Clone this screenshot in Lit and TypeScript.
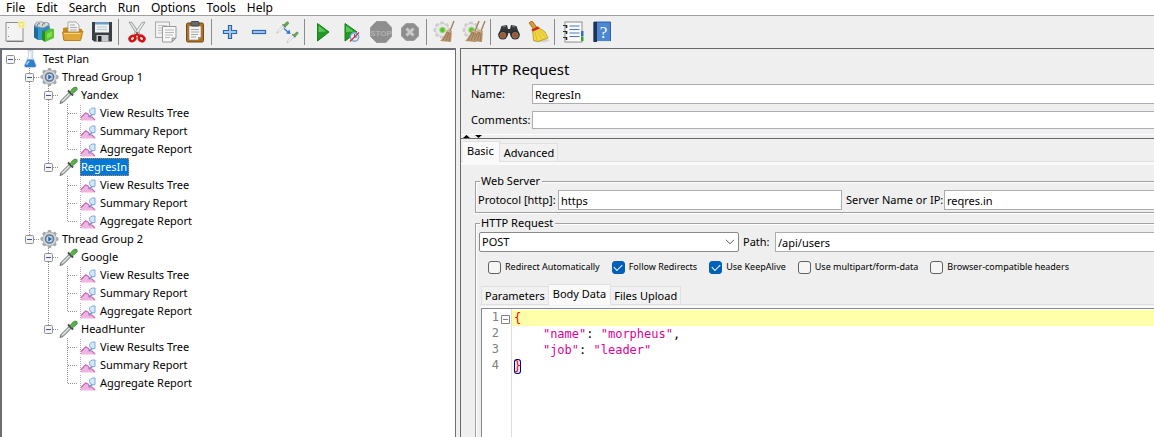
import { LitElement, html, css, svg, nothing, type TemplateResult, type SVGTemplateResult } from "lit";
import { customElement, state } from "lit/decorators.js";
import { classMap } from "lit/directives/class-map.js";

type Kind = "plan" | "group" | "sampler" | "report";
interface TreeNode { label: string; kind: Kind; children?: TreeNode[]; }
interface Tool { name: string; art: SVGTemplateResult; off?: boolean; }

const reports = (): TreeNode[] =>
  ["View Results Tree", "Summary Report", "Aggregate Report"].map((label) => ({ label, kind: "report" as Kind }));

const plan: TreeNode = {
  label: "Test Plan", kind: "plan", children: [
    { label: "Thread Group 1", kind: "group", children: [
      { label: "Yandex", kind: "sampler", children: reports() },
      { label: "RegresIn", kind: "sampler", children: reports() },
    ] },
    { label: "Thread Group 2", kind: "group", children: [
      { label: "Google", kind: "sampler", children: reports() },
      { label: "HeadHunter", kind: "sampler", children: reports() },
    ] },
  ],
};

const gearTeeth = (cx: number, cy: number, r: number, w: number, fill: string) =>
  [0, 45, 90, 135].map((a) => svg`<rect x=${cx - w / 2} y=${cy - r} width=${w} height=${r * 2} rx="1" fill=${fill} transform="rotate(${a} ${cx} ${cy})"/>`);

const broom = (x: number) => svg`<g transform="translate(${x} 0)">
  <path d="M20 1 L16 11" stroke="#a08260" stroke-width="1.400"/>
  <path d="M13 10 L18 11 L17 22 L6 21 C9 18 11 15 13 10Z" fill="#bb9770"/>
  <path d="M13.500 12 L9 20.500 M15 12 L12 21 M16.500 12 L15 21.500" stroke="#8d6c4b" stroke-width=".7"/>
  <path d="M12.800 11 L18 12.500" stroke="#d9b98e"/></g>`;

const paleGear = svg`${gearTeeth(9, 10, 8.5, 4, "#cfcfcf")}<circle cx="9" cy="10" r="6.500" fill="#e8e8e8" stroke="#c2c2c2" stroke-width=".6"/>
  <circle cx="9.500" cy="10" r="2.800" fill="#5fc42c" stroke="#9bd97b"/>`;

const pipette = (t: string) => svg`<g transform=${t}>
  <path d="M1 17 L3 13 L10 6 L12 8 L5 15Z" fill="#f6f8f8" stroke="#b4bcbc" stroke-width=".9"/>
  <path d="M9 4.500 L13.500 9" stroke="#6b7a68" stroke-width="1.800"/>
  <path d="M11 6 L14 2.500 Q16 .8 17 2 Q17.800 3.500 16 5 L13 7.500Z" fill="#68ac58" stroke="#5a9a4c" stroke-width="1.400"/></g>`;

const groups: Tool[][] = [
  [
    { name: "New", art: svg`<rect x="3" y="2.500" width="17" height="18.500" fill="#f3f3f3" stroke="#8f8f8f"/><path d="M4 21.500H20.500" stroke="#777"/><path d="M5 7.500h1M5 16.500h1" stroke="#888"/><circle cx="18.500" cy="4.500" r="4" fill="#f7ee9a" opacity=".9"/><circle cx="18.500" cy="4.500" r="1.700" fill="#fffde0" stroke="#e6cf3a" stroke-width=".8"/>` },
    { name: "Templates", art: svg`<path d="M2 5 L9 2 L17 3 L18 9 L10 20 L2 17Z" fill="#3989b8"/><path d="M3 6 Q3 1.500 7 2 Q10 1 12 3 Q16 1 17 5 L11 8Z" fill="#d9dcdd" stroke="#8b979d" stroke-width=".8"/><path d="M5 6q1-4 3-2M10 6q1-4 3-2" stroke="#777" fill="none"/><path d="M2 7 L6 9 V20 L2 17.500Z" fill="#1d6b9b"/><path d="M6 9 L11 7.500 V20 L6 20Z" fill="#2f9ccb"/><path d="M10 10 L13 12 V22 L10 20Z" fill="#2e8a1b"/><path d="M13 12 L16 10 L18 8.500 L22 9 V18 L13 22Z" fill="#57c52e"/><path d="M15 13.500 L20 11.500V16L15 18.500Z" fill="#80df4e"/>` },
    { name: "Open", art: svg`<path d="M2 8 L8 7 L21 9 V18 L2 20Z" fill="#c88918"/><path d="M7 2 H15 L18 5 V13 H7Z" fill="#f5f5f5" stroke="#9a9a9a" stroke-width=".8"/><path d="M9 5h5M9 7.500h7M9 10h7" stroke="#a9a9a9"/><path d="M1.500 12 H20 L22 11 L19.500 20.500 H3Z" fill="#e0a63a" stroke="#b97a14" stroke-width=".9"/><path d="M3 13.500H19.500" stroke="#f7d486"/>` },
    { name: "Save", art: svg`<path d="M2 2 H22 V21.500 H4 L2 19.500Z" fill="#3b3f45"/><rect x="5" y="2" width="14" height="10.500" fill="#eef2f5"/><rect x="5" y="2" width="14" height="2.500" fill="#6f9bc4"/><path d="M7 7h10M7 9.500h10" stroke="#bcc5cc"/><rect x="6.500" y="15" width="12" height="6.500" fill="#c7cbcf"/><rect x="8" y="16" width="3.500" height="5.500" fill="#24272b"/>` },
  ],
  [
    { name: "Cut", art: svg`<path d="M4 2 L7 2.500 L15 14 L12.500 15.500Z" fill="#dfe2e2" stroke="#8a8e8e" stroke-width=".8"/><path d="M20 2 L17 2.500 L9 14 L11.500 15.500Z" fill="#eceeee" stroke="#8a8e8e" stroke-width=".8"/><circle cx="12" cy="12.500" r=".8" fill="#555"/><ellipse cx="7.500" cy="18.500" rx="3" ry="2.400" transform="rotate(-35 7.500 18.500)" fill="none" stroke="#d41414" stroke-width="2.600"/><ellipse cx="16.500" cy="18.500" rx="3" ry="2.400" transform="rotate(35 16.500 18.500)" fill="none" stroke="#d41414" stroke-width="2.600"/><path d="M9.500 16 L12 14 L14.500 16" stroke="#d41414" stroke-width="2" fill="none"/>` },
    { name: "Copy", art: svg`<rect x="1.500" y="2" width="14" height="15.500" fill="#f2f2f2" stroke="#aaa"/><path d="M4 5.500h9M4 8h4M4 10.500h4M4 13h4" stroke="#c2c2c2"/><path d="M8.500 6.500 H22 V18 L18 22 H8.500Z" fill="#f7f7f7" stroke="#999"/><path d="M22 18 H18 V22Z" fill="#bbb" stroke="#888" stroke-width=".7"/><path d="M11 10h9M11 12.500h9M11 15h8M11 17.500h5" stroke="#b8b8b8"/>` },
    { name: "Paste", art: svg`<rect x="3.500" y="3" width="17" height="19" rx="1.500" fill="#b3701c" stroke="#7d4a0d"/><path d="M6 6 H18 V17 L15 20 H6Z" fill="#f4f4f4" stroke="#888" stroke-width=".6"/><path d="M18 17 H15 V20Z" fill="#999"/><rect x="8" y="1.500" width="8" height="4.500" rx="1" fill="#666a6a" stroke="#454848"/><path d="M8 9.500h8M8 12h8M8 14.500h7M8 17h5" stroke="#a5a5a5"/>` },
  ],
  [
    { name: "Expand All", art: svg`<path d="M10.500 5.500h3v5h5v3h-5v5h-3v-5h-5v-3h5z" fill="#a9caef" stroke="#2f65ad" stroke-width="1.200"/>` },
    { name: "Collapse All", art: svg`<rect x="5.500" y="10.500" width="13" height="3" fill="#a9caef" stroke="#2f65ad" stroke-width="1.200"/>` },
    { name: "Toggle", art: svg`${pipette("translate(0 1) scale(.72)")}${pipette("translate(10 11) scale(.7)")}<path d="M8 8.500 L12.500 12.500" stroke="#2d74d8" stroke-width="1.200"/><path d="M14.500 14 L10 13.500 L13.500 9.500Z" fill="#2d74d8"/>` },
  ],
  [
    { name: "Start", art: svg`<path d="M6.500 3.500 L18 12 L6.500 21Z" fill="#1f9a22" stroke="#148018"/><path d="M7.500 5.500 L15 11.500 L7.500 12Z" fill="#58c757"/>` },
    { name: "Start no pauses", art: svg`<path d="M5 3.500 L17 12 L5 21Z" fill="#1f9a22" stroke="#148018"/><path d="M6 5.500 L14 11.500 L6 12Z" fill="#58c757"/><circle cx="14.500" cy="17" r="4.200" fill="#dfe9f5" stroke="#7ba4d6" stroke-width="1.400"/><path d="M14.500 17V14M14.500 17h2.500" stroke="#4c6c96"/><path d="M10 21.500 L19 12.500" stroke="#d83232" stroke-width="1.300"/>` },
    { name: "Stop", off: true, art: svg`<path d="M7.500 1.500H17L22.500 7.500V16.500L17 22.500H7.500L1.500 16.500V7.500Z" fill="#8e8e8e" stroke="#999"/><text x="12" y="15.500" text-anchor="middle" font-family="Liberation Sans, sans-serif" font-size="8" font-weight="bold" fill="#b0b0b0">STOP</text>` },
    { name: "Shutdown", off: true, art: svg`<path d="M8 3.500H16L20.500 8V16L16 20.500H8L3.500 16V8Z" fill="#8e8e8e" stroke="#9d9d9d"/><path d="M8.500 8.500L15.500 15.500M15.500 8.500L8.500 15.500" stroke="#c9c9c9" stroke-width="3"/>` },
  ],
  [
    { name: "Clear", art: svg`${paleGear}${broom(1)}` },
    { name: "Clear All", art: svg`${paleGear}${broom(-3)}${broom(3)}` },
  ],
  [
    { name: "Search", art: svg`<path d="M4.500 6 L10 5 L11 9 H13 L14 5 L19.500 6 L22.500 15 L14 17 L12.500 13 H11.500 L10 17 L1.500 15Z" fill="#34373a"/><path d="M5.500 7 L9 6.500M15 6.500L18.500 7" stroke="#777" stroke-width="1.200"/><circle cx="5.800" cy="15" r="4.600" fill="#2a2c2e"/><circle cx="18.200" cy="15" r="4.600" fill="#2a2c2e"/><circle cx="5.800" cy="15.300" r="3" fill="#a5572a" stroke="#808080" stroke-width=".8"/><circle cx="18.200" cy="15.300" r="3" fill="#a5572a" stroke="#808080" stroke-width=".8"/>` },
    { name: "Reset Search", art: svg`<ellipse cx="15" cy="20.500" rx="8" ry="1.800" fill="#d2d2d2"/><path d="M3 3 Q5 0 7 2 L11 7.500 L7.500 9Z" fill="#d99c3a" stroke="#9a6615" stroke-width=".8"/><path d="M6 9 L12 7 L19 12 L22 18 L12 21.500 L7.500 20.500 L7 14Z" fill="#f3d73f" stroke="#b2921a" stroke-width=".8"/><path d="M5.500 9.500 L12 6.500 L13.500 8.500 L7 11.500Z" fill="#d3202a"/><path d="M9 12l2 8M11 11l5 8M13 10l6.500 7.500" stroke="#d0b030" stroke-width=".7"/>` },
  ],
  [
    { name: "Function Helper", art: svg`<rect x="4" y="2" width="17" height="20" fill="#fafafa" stroke="#8d8d8d"/><rect x="20" y="11" width="2.500" height="5" fill="#2d6fd2"/><rect x="20" y="16.500" width="2.500" height="4.500" fill="#31a534"/><path d="M8.500 6h10M8.500 9.500h10M8.500 13h10M8.500 16.500h10" stroke="#4a7dbd" stroke-width="1.200"/><path d="M2 5.500h4M2 11.500h4M2 17.500h4" stroke="#333" stroke-width="1.200"/><path d="M5.500 5v3M5.500 11v3M5.500 17v3" stroke="#222" stroke-width="1.600"/>` },
    { name: "Help", art: svg`<path d="M4 2 H20.500 V21.500 H4Z" fill="#4b87d3" stroke="#2f619f"/><path d="M3.500 2 H7 V22 H3.500Z" fill="#20344f"/><path d="M7 21.500H21" stroke="#e5e5e5"/><text x="13.500" y="17.500" text-anchor="middle" font-family="Liberation Serif, serif" font-size="17" fill="#fff">?</text>` },
  ],
];

const treeArt: Record<Kind, SVGTemplateResult> = {
  plan: svg`<path d="M7 .5 H12 L11.500 6.500 L15 15 Q15.500 17.500 13.500 17.500 H5 Q3 17.500 3.500 15 L7.500 6.500Z" fill="#dfe8ef" stroke="#bccbd8" stroke-width=".8"/><path d="M6.500 9.500 H12.500 L14.800 15.500 Q15 17 13.500 17 H5 Q3.500 17 3.700 15.500Z" fill="#2f7fcb"/><path d="M8.800 2V9" stroke="#fff" stroke-width="1.200"/><path d="M5.500 14.500 L8 11" stroke="#a5d2f5" stroke-width="1.500"/>`,
  group: svg`${gearTeeth(9.5, 9, 9, 3.6, "#a3a7ab")}<circle cx="9.500" cy="9" r="7" fill="#d3d6d9" stroke="#a3a7ab" stroke-width=".8"/><circle cx="9.500" cy="9" r="4" fill="#c3d6ec" stroke="#63788f" stroke-width="1.600"/><path d="M8.300 6.600 L12 9 L8.300 11.400Z" fill="#2b5fa3"/>`,
  sampler: svg`<path d="M1 17.500 L2 14.500 L10.500 6 L12.500 8 L4 16.500Z" fill="#b9c0c0" stroke="#5e6666" stroke-width=".9"/><path d="M3.500 14.800 L10 8.300" stroke="#fff"/><path d="M9 4.500 L14 9.500" stroke="#3d4a3b" stroke-width="1.800"/><path d="M11 6 L13.500 2.500 Q16 .3 18 1.500 Q19 3.500 16.500 5.500 L13 8Z" fill="#5fae50" stroke="#3f8a36" stroke-width=".8"/>`,
  report: svg`<path d="M2.500 1V16.500" stroke="#b9a9b9" fill="none" stroke-dasharray="1 1"/><path d="M17 4 Q11.500 3.500 11.500 7.500 Q11.800 10.500 14.500 10.800 L17 10.500Z" fill="#d5e7fa" stroke="#7fabd9" stroke-width="1"/><path d="M3 13 L8 8.500 L12 11.500 L17.500 16.500 H3Z" fill="#f1b4e2"/><path d="M3 13.500 L7.500 9 L10 10 L12 13 L14 13 L17 16" fill="none" stroke="#cf66ae" stroke-width="1.100"/><path d="M10.500 13 L14.500 10.500" stroke="#5b92d0" stroke-width="1.200"/>`,
};

@customElement("app-root")
export class AppRoot extends LitElement {
  @state() private selected = "RegresIn";

  static styles = css`
    :host { display: flex; flex-direction: column; height: 100vh; overflow: hidden; background: #efefef; color: #000;
      font: 11px/16px "Noto Sans", "Open Sans", sans-serif; }
    * { box-sizing: border-box; }
    input, select, button { font: inherit; color: inherit; margin: 0; }
    .menu { display: flex; height: 16px; background: #fff; border-bottom: 1px solid #a0a0a0; padding-left: 1px; font-size: 12px; }
    .menu button { border: 0; background: none; padding: 0 6px 0 5px; white-space: nowrap; line-height: 12px; }
    .tools { display: flex; height: 32px; align-items: center; flex: none; }
    .tool { width: 29px; height: 28px; padding: 0; border: 0; background: none; display: grid; place-items: center; }
    .tool svg { display: block; width: 24px; height: 24px; }
    .sep { width: 6px; height: 26px; border-right: 3px solid transparent; background: linear-gradient(#8c8c8c, #8c8c8c) right / 1px 100% no-repeat; background-origin: padding-box; }
    .main { flex: 1; min-height: 0; display: grid; grid-template-columns: minmax(0, 460px) minmax(0, 1fr); }
    .tree { background: #fff; border: solid #6c6e75; border-width: 2px 1px 0 2px; margin-right: 4px; overflow: hidden; }
    .row { display: flex; height: 18px; align-items: center; }
    .cell { width: 19px; height: 18px; flex: none; display: block; }
    .name { margin-left: 2px; padding: 0 2px 0 1px; line-height: 18px; white-space: nowrap; border: 0; background: none; text-align: left; }
    .name.on { background: #0078d7; color: #fff; outline: 1px dotted #e08030; outline-offset: -1px; }
    .panel { border: solid #696969; border-width: 1px 0 0 1px; display: flex; flex-direction: column; min-width: 0; }
    .head { padding: 11px 0 5px 10px; border-bottom: 1px solid #fff; }
    h1 { font-size: 15px; font-weight: 400; line-height: 18px; margin: 0 0 6px; }
    .field { display: grid; grid-template-columns: 61px 1fr; align-items: center; }
    .field + .field { margin-top: 7px; }
    .text { width: 100%; min-width: 0; height: 20px; border: 1px solid #abadb3; border-right: 0; background: #fff; padding: 0 2px; border-radius: 0; outline: 0; }
    .boxed { border-right: 1px solid #abadb3; }
    #comments { height: 18px; }
    .split { height: 4px; border-bottom: 1px solid #696969; display: flex; padding-left: 2px; gap: 5px; }
    .split svg { width: 7px; height: 3px; display: block; }
    .tabs { display: flex; align-items: flex-end; border-bottom: 1px solid #e0e0e0; }
    .tab { border: 1px solid #e0e0e0; border-left-width: 0; border-bottom: 0; background: #f1f1f1; height: 18px; padding: 0 3px; line-height: 18px; white-space: nowrap; }
    .tab.on { background: #fafafa; height: 21px; line-height: 18px; margin-bottom: -1px; padding: 0 5px 2px; }
    .outer { padding: 2px 0 0 2px; }
    .outer .tab { padding-left: 4px; }
    .page { flex: 1; min-height: 0; display: flex; flex-direction: column; border-top: 3px solid #fafafa; padding: 8px 0 0 14px; }
    fieldset { margin: 0; border: 1px solid #a0a0a0; border-right: 0; min-width: 0; padding: 0; box-shadow: inset 1px 1px #fff, 0 1px #fff; }
    legend { margin-left: 4px; padding: 0 2px 0 1px; line-height: 16px; background: #efefef; }
    .server { display: flex; align-items: center; padding: 1px 0 2px 2px; }
    .server label, .request label { white-space: nowrap; }
    .proto { flex: 0 0 80px; }
    .proto-in { flex: 0 1 284px; }
    .host { flex: 0 0 98px; margin-left: 4px; }
    .server .last, .request .last { flex: 1 1 0; }
    .http { flex: 1; display: flex; flex-direction: column; margin-top: 2px; border-bottom: 0; }
    .request { display: flex; align-items: center; padding: 1px 0 0 3px; }
    .combo { flex: 0 1 260px; display: grid; min-width: 0; align-items: center; }
    .combo select, .combo svg { grid-area: 1 / 1; }
    .combo select { appearance: none; height: 20px; border: 1px solid #8a8a8a; border-radius: 2px; background: #fff; padding: 0 2px; outline: 0; }
    .combo svg { justify-self: end; width: 10px; height: 6px; margin-right: 4px; pointer-events: none; }
    .path { flex: 0 0 36px; padding-left: 4px; }
    .checks { display: flex; gap: 12px; padding: 7px 0 0 12px; font-size: 9px; }
    .check { display: flex; align-items: center; gap: 4px; white-space: nowrap; height: 16px; }
    .check input { appearance: none; width: 13px; height: 13px; border: 1px solid #626262; border-radius: 3px; background: #f5f5f5; display: grid; place-items: center; }
    .check input:checked { background: #005fb8; border-color: #005fb8; }
    .check input:checked::before { content: ""; width: 7px; height: 4px; margin-bottom: 2px; border: solid #fff; border-width: 0 0 1px 1px; transform: rotate(-45deg); }
    .inner { margin: 9px 0 0 4px; padding-left: 1px; }
    .inner .tab:first-child { border-left-width: 1px; }
    .inner .tab.on { padding: 0 4px 2px; }
    .code { flex: 1; min-height: 0; margin: 3px 0 0 5px; display: flex; border: solid #828790; border-width: 1px 0 0 1px; background: #fff;
      font: 12px/16px "DejaVu Sans Mono", monospace; padding-top: 1px; box-shadow: 0 -2px #fafafa; }
    .nums { width: 30px; margin-top: -1px; border-right: 1px solid #ddd; color: #808080; display: flex; }
    .nums ol { list-style: none; margin: 0; padding: 0; width: 17px; text-align: right; }
    .nums svg { width: 9px; height: 9px; margin: 6px 0 0 2px; }
    pre { margin: 0; flex: 1; min-width: 0; font: inherit; }
    .line { height: 16px; padding-left: 2px; }
    .current { background: #ffffaa; }
    .brace { color: #f00; }
    .match { display: inline-block; height: 15px; line-height: 14px; color: #f00; background: #eaeaff; border-radius: 3px; box-shadow: inset 0 0 0 1px #000080; }
    .str { color: #dc009c; }
  `;

  private handle() {
    return svg`<rect x="4.500" y="5.500" width="8" height="8" rx="1" fill="#f4f4f4" stroke="#919191"/><path d="M6 9.500h5" stroke="#3b55a5"/>`;
  }

  private rows(node: TreeNode, level: number, last: boolean, trail: boolean[]): TemplateResult[] {
    const kids = node.children ?? [];
    const on = this.selected === node.label;
    const row = html`<div class="row" role="treeitem" aria-level=${level + 1} aria-selected=${on}>
      ${trail.map((line) => html`<svg class="cell" viewBox="0 0 19 18">${line ? svg`<path d="M8.500 0V18" stroke="#8c8c8c" stroke-dasharray="1 1"/>` : nothing}</svg>`)}
      <svg class="cell" viewBox="0 0 19 18">
        ${level ? svg`<path d="M8.500 0V${last ? 10 : 18}" stroke="#8c8c8c" stroke-dasharray="1 1"/>` : nothing}
        <path d="M9 9.500H18" stroke="#8c8c8c" stroke-dasharray="1 1"/>
        ${kids.length ? this.handle() : nothing}
      </svg>
      <svg class="cell" viewBox="0 0 19 18" fill="none">${treeArt[node.kind]}</svg>
      <button class=${classMap({ name: true, on })} @click=${() => { this.selected = node.label; }}>${node.label}</button>
    </div>`;
    const next = [...trail, level > 0 && !last];
    return [row, ...kids.flatMap((k, i) => this.rows(k, level + 1, i === kids.length - 1, next))];
  }

  private check(label: string, checked = false) {
    return html`<label class="check"><input type="checkbox" .checked=${checked}>${label}</label>`;
  }

  private tabs(cls: string, names: string[], active: string) {
    return html`<div class="tabs ${cls}" role="tablist">${names.map((n) => html`<button role="tab" aria-selected=${n === active} class=${classMap({ tab: true, on: n === active })}>${n}</button>`)}</div>`;
  }

  render() {
    return html`
      <nav class="menu">${["File", "Edit", "Search", "Run", "Options", "Tools", "Help"].map((m) => html`<button>${m}</button>`)}</nav>
      <div class="tools" role="toolbar">
        ${groups.map((g, i) => html`${i ? html`<span class="sep"></span>` : nothing}${g.map((t) => html`<button class="tool" aria-label=${t.name} ?disabled=${t.off}><svg viewBox="0 0 24 24" fill="none">${t.art}</svg></button>`)}`)}
      </div>
      <div class="main">
        <div class="tree" role="tree">${this.rows(plan, 0, true, [])}</div>
        <section class="panel">
          <div class="head">
            <h1>HTTP Request</h1>
            <div class="field"><label for="name">Name:</label><input class="text" id="name" .value=${"RegresIn"}></div>
            <div class="field"><label for="comments">Comments:</label><input class="text" id="comments"></div>
          </div>
          <div class="split"><svg viewBox="0 0 7 3"><path d="M0 3L3.500 0L7 3Z"/></svg><svg viewBox="0 0 7 3"><path d="M0 0L3.500 3L7 0Z"/></svg></div>
          ${this.tabs("outer", ["Basic", "Advanced"], "Basic")}
          <div class="page">
            <fieldset>
              <legend>Web Server</legend>
              <div class="server">
                <label class="proto" for="protocol">Protocol [http]:</label><input class="text boxed proto-in" id="protocol" .value=${"https"}>
                <label class="host" for="server">Server Name or IP:</label><input class="text last" id="server" .value=${"reqres.in"}>
              </div>
            </fieldset>
            <fieldset class="http">
              <legend>HTTP Request</legend>
              <div class="request">
                <div class="combo"><select aria-label="Method"><option>POST</option><option>GET</option></select><svg viewBox="0 0 10 6" fill="none"><path d="M1 .8L5 4.800L9 .8" stroke="#555"/></svg></div>
                <label class="path" for="path">Path:</label><input class="text last" id="path" .value=${"/api/users"}>
              </div>
              <div class="checks">
                ${this.check("Redirect Automatically")}${this.check("Follow Redirects", true)}${this.check("Use KeepAlive", true)}${this.check("Use multipart/form-data")}${this.check("Browser-compatible headers")}
              </div>
              ${this.tabs("inner", ["Parameters", "Body Data", "Files Upload"], "Body Data")}
              <div class="code">
                <div class="nums"><ol><li>1</li><li>2</li><li>3</li><li>4</li></ol><svg viewBox="0 0 9 9" fill="none"><path d="M.5 .5h8v8h-8zM2 4.500h5" stroke="#808080"/></svg></div>
                <pre><div class="line current"><span class="brace">{</span></div><div class="line">    <span class="str">"name"</span>: <span class="str">"morpheus"</span>,</div><div class="line">    <span class="str">"job"</span>: <span class="str">"leader"</span></div><div class="line"><span class="match">}</span></div></pre>
              </div>
            </fieldset>
          </div>
        </section>
      </div>`;
  }
}
